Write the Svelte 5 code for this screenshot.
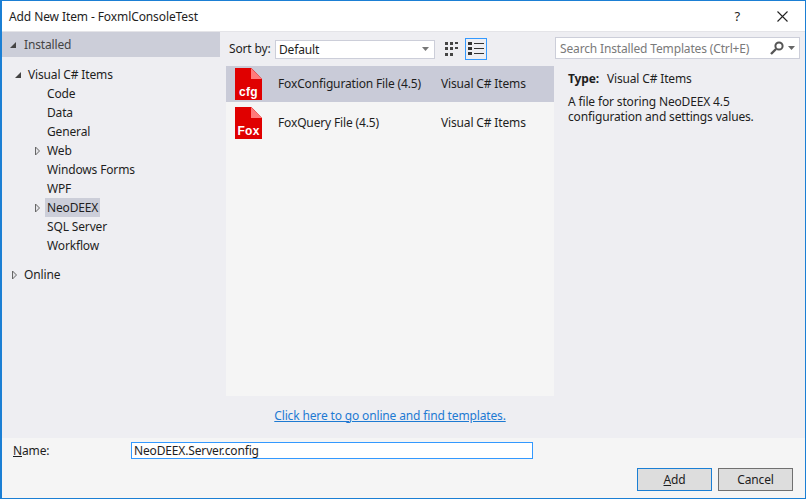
<script>
  const tree = [
    { label: 'Code' },
    { label: 'Data' },
    { label: 'General' },
    { label: 'Web', arrow: true },
    { label: 'Windows Forms' },
    { label: 'WPF' },
    { label: 'NeoDEEX', arrow: true, selected: true },
    { label: 'SQL Server' },
    { label: 'Workflow' }
  ];

  const templates = [
    { name: 'FoxConfiguration File (4.5)', badge: 'cfg', selected: true },
    { name: 'FoxQuery File (4.5)', badge: 'Fox' }
  ];
</script>

<div class="dialog">
  <header class="titlebar">
    <span class="title">Add New Item - FoxmlConsoleTest</span>
    <span class="help">?</span>
    <svg class="close" width="11" height="11" viewBox="0 0 11 11">
      <path d="M0.5 0.5 L10.5 10.5 M10.5 0.5 L0.5 10.5" stroke="#222" stroke-width="1.1" fill="none" />
    </svg>
  </header>

  <div class="body">
    <aside class="side">
      <div class="installed">
        <svg class="arrow" width="8" height="8" viewBox="0 0 8 8"><path d="M7 1 V7 H1 Z" fill="#444" /></svg>
        <span>Installed</span>
      </div>
      <div class="tree">
        <div class="node root">
          <svg class="arrow" width="8" height="8" viewBox="0 0 8 8"><path d="M7 1 V7 H1 Z" fill="#444" /></svg>
          <span>Visual C# Items</span>
        </div>
        {#each tree as item}
          <div class="node child">
            <span class="slot">
              {#if item.arrow}
                <svg width="7" height="10" viewBox="0 0 7 10"><path d="M1.5 1 L5.5 5 L1.5 9 Z" fill="#e4e4e8" stroke="#666" /></svg>
              {/if}
            </span>
            <span class="label" class:selected={item.selected}>{item.label}</span>
          </div>
        {/each}
        <div class="node online">
          <svg width="7" height="10" viewBox="0 0 7 10"><path d="M1.5 1 L5.5 5 L1.5 9 Z" fill="#e4e4e8" stroke="#666" /></svg>
          <span>Online</span>
        </div>
      </div>
    </aside>

    <main class="center">
      <div class="toolbar">
        <span class="sort-label">Sort by:</span>
        <div class="select">
          <span>Default</span>
          <svg width="7" height="4" viewBox="0 0 7 4"><path d="M0 0 H7 L3.5 4 Z" fill="#777" /></svg>
        </div>
        <button class="view" aria-label="Small icons">
          <svg width="16" height="16" viewBox="0 0 16 16" fill="#444">
            <rect x="0" y="1" width="3" height="3" /><rect x="5" y="1" width="3" height="3" /><rect x="10" y="1" width="3" height="2" />
            <rect x="0" y="6" width="3" height="3" /><rect x="5" y="6" width="3" height="3" /><rect x="10" y="6" width="3" height="2" />
            <rect x="0" y="12" width="3" height="3" /><rect x="5" y="12" width="3" height="3" />
          </svg>
        </button>
        <button class="view active" aria-label="List">
          <svg width="16" height="14" viewBox="0 0 16 14" fill="#333">
            <rect x="0" y="0" width="4" height="3" /><rect x="6" y="1" width="10" height="1" />
            <rect x="0" y="5" width="4" height="3" /><rect x="6" y="6" width="10" height="1" />
            <rect x="0" y="10" width="4" height="3" /><rect x="6" y="11" width="10" height="1" />
          </svg>
        </button>
      </div>

      <div class="list">
        {#each templates as t}
          <div class="row" class:selected={t.selected}>
            <div class="file">
              <span class="fold"></span>
              <span class="badge">{t.badge}</span>
            </div>
            <span class="name">{t.name}</span>
            <span class="type">Visual C# Items</span>
          </div>
        {/each}
      </div>

      <div class="online-link"><span>Click here to go online and find templates.</span></div>
    </main>

    <aside class="info">
      <div class="search">
        <span class="placeholder">Search Installed Templates (Ctrl+E)</span>
        <svg width="16" height="14" viewBox="0 0 16 14">
          <circle cx="10" cy="5" r="3.6" fill="none" stroke="#555" stroke-width="2" />
          <path d="M7 8 L2 13" stroke="#555" stroke-width="2.4" />
        </svg>
        <svg width="7" height="4" viewBox="0 0 7 4"><path d="M0 0 H7 L3.5 4 Z" fill="#666" /></svg>
      </div>
      <div class="details">
        <div class="type-line"><b>Type:</b><span>Visual C# Items</span></div>
        <p>A file for storing NeoDEEX 4.5 configuration and settings values.</p>
      </div>
    </aside>
  </div>

  <footer class="footer">
    <div class="name-row">
      <label for="item-name"><u>N</u>ame:</label>
      <input id="item-name" value="NeoDEEX.Server.config" />
    </div>
    <div class="buttons">
      <button class="btn primary"><u>A</u>dd</button>
      <button class="btn">Cancel</button>
    </div>
  </footer>
</div>

<style>
  :global(body) {
    margin: 0;
    background: #fff;
  }

  .dialog {
    box-sizing: border-box;
    width: 806px;
    height: 499px;
    display: flex;
    flex-direction: column;
    border: 1px solid #1b7fd4;
    border-left-width: 2px;
    font-family: "Noto Sans", "Noto Sans CJK KR", sans-serif;
    font-size: 12px;
    letter-spacing: -0.15px;
    color: #1e1e1e;
  }

  .titlebar {
    flex: none;
    height: 30px;
    display: flex;
    align-items: center;
    background: #fff;
    padding: 0 17px 0 7px;
  }

  .title {
    flex: 1;
    letter-spacing: -0.1px;
  }

  .help {
    margin-right: 37px;
    font-size: 13px;
  }

  .body {
    flex: 1;
    display: flex;
    background: #eeeef2;
    border-top: 1px solid #e4e4e8;
    min-height: 0;
  }

  .side {
    flex: none;
    width: 218px;
  }

  .installed {
    height: 25px;
    display: flex;
    align-items: center;
    gap: 7px;
    padding-left: 7px;
    background: #ccced9;
    color: #444;
  }

  .tree {
    padding: 8px 0 0 0;
  }

  .node {
    height: 19px;
    display: flex;
    align-items: center;
    white-space: nowrap;
  }

  .root {
    padding-left: 12px;
    gap: 6px;
  }

  .child {
    padding-left: 32px;
  }

  .slot {
    width: 11px;
    display: flex;
    align-items: center;
  }

  .label {
    padding: 0 2px;
    line-height: 19px;
  }

  .label.selected {
    background: #ccced9;
  }

  .online {
    margin-top: 10px;
    padding-left: 9px;
    gap: 6px;
  }

  .center {
    flex: none;
    width: 328px;
    margin-left: 6px;
    display: flex;
    flex-direction: column;
  }

  .toolbar {
    height: 34px;
    display: flex;
    align-items: center;
    padding-left: 3px;
    flex: none;
  }

  .sort-label {
    width: 46px;
    padding-bottom: 1px;
  }

  .select {
    box-sizing: border-box;
    width: 160px;
    height: 19px;
    display: flex;
    align-items: center;
    justify-content: space-between;
    padding: 0 5px 0 3px;
    background: #fff;
    border: 1px solid #ccced9;
  }

  .view {
    box-sizing: border-box;
    width: 22px;
    height: 22px;
    margin-left: 7px;
    padding: 0;
    display: flex;
    align-items: center;
    justify-content: center;
    background: none;
    border: 1px solid transparent;
  }

  .view.active {
    border-color: #3399ff;
    margin-left: 1px;
  }

  .list {
    flex: none;
    height: 330px;
    background: #f5f5f5;
    display: flex;
    flex-direction: column;
    gap: 3px;
  }

  .row {
    height: 36px;
    display: flex;
    align-items: center;
    padding-left: 9px;
  }

  .row.selected {
    background: #c9cbd8;
  }

  .file {
    position: relative;
    flex: none;
    width: 27px;
    height: 32px;
    background: #e00000;
    clip-path: polygon(0 0, 60% 0, 100% 34%, 100% 100%, 0 100%);
    display: flex;
    align-items: flex-end;
    justify-content: center;
  }

  .fold {
    position: absolute;
    top: 0;
    right: 0;
    width: 11px;
    height: 11px;
    background: #ff7a7a;
    clip-path: polygon(0 0, 100% 100%, 0 100%);
  }

  .badge {
    color: #fff;
    font-family: "Liberation Sans", sans-serif;
    font-weight: bold;
    font-size: 12px;
    line-height: 16px;
    letter-spacing: 0.3px;
  }

  .name {
    width: 163px;
    margin-left: 16px;
    padding-bottom: 2px;
    white-space: nowrap;
  }

  .type {
    padding-bottom: 2px;
    white-space: nowrap;
  }

  .online-link {
    flex: 1;
    display: flex;
    align-items: center;
    justify-content: center;
    color: #1e7ad2;
    text-decoration: underline;
    padding-bottom: 4px;
  }

  .info {
    flex: 1;
    padding: 5px 5px 0 1px;
  }

  .search {
    box-sizing: border-box;
    height: 22px;
    display: flex;
    align-items: center;
    gap: 3px;
    padding: 0 4px;
    background: #fff;
    border: 1px solid #ccced9;
  }

  .placeholder {
    flex: 1;
    color: #7a7a7a;
    white-space: nowrap;
  }

  .details {
    padding: 11px 0 0 13px;
  }

  .type-line {
    display: flex;
    gap: 8px;
  }

  .details p {
    margin: 7px 0 0;
    line-height: 15px;
    width: 200px;
  }

  .footer {
    flex: none;
    height: 60px;
    background: #f5f5f5;
    display: flex;
    flex-direction: column;
  }

  .name-row {
    display: flex;
    align-items: center;
    padding: 4px 0 0 11px;
  }

  .name-row label {
    width: 118px;
  }

  .name-row input {
    box-sizing: border-box;
    width: 402px;
    height: 17px;
    padding: 0 2px;
    border: 1px solid #3399ff;
    font: inherit;
    letter-spacing: inherit;
    color: inherit;
    background: #fff;
    outline: none;
  }

  .buttons {
    display: flex;
    justify-content: flex-end;
    gap: 6px;
    padding: 9px 12px 0 0;
  }

  .btn {
    box-sizing: border-box;
    width: 75px;
    height: 23px;
    padding: 0;
    background: #dddddd;
    border: 1px solid #707070;
    font: inherit;
    letter-spacing: inherit;
    color: inherit;
  }

  .btn.primary {
    border-color: #1b7fd4;
  }
</style>
